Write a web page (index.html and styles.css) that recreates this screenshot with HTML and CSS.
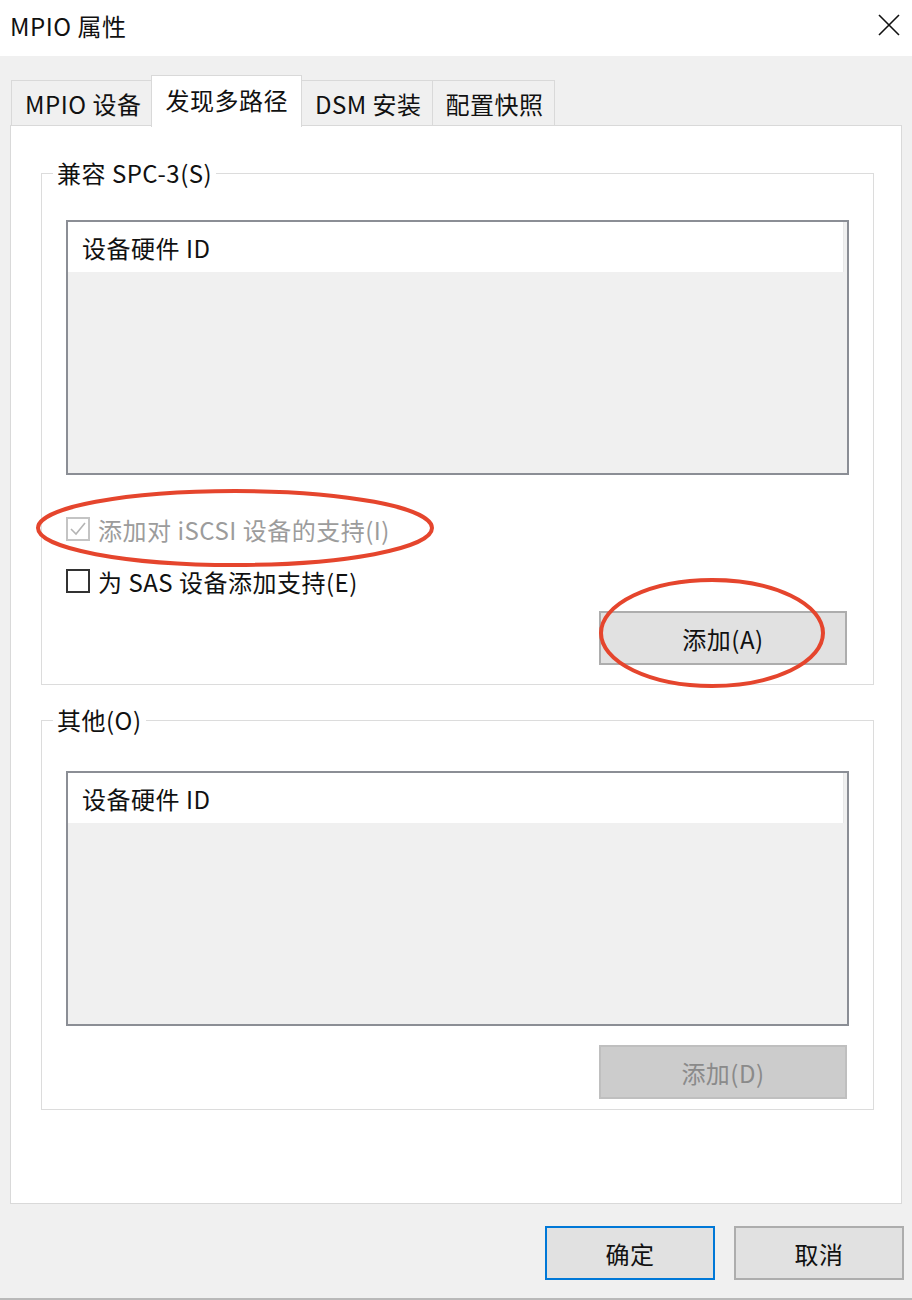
FILE: index.html
```html
<!DOCTYPE html>
<html lang="zh-CN">
<head>
    <meta charset="UTF-8">
    <title>MPIO 属性</title>
    <link rel="stylesheet" href="styles.css">
</head>
<body>
    <div class="window">
        <div class="titlebar">
            <span class="title">MPIO 属性</span>
            <svg class="close-icon" width="22" height="22" viewBox="0 0 22 22">
                <path d="M1 1 L21 21 M21 1 L1 21" stroke="#111" stroke-width="1.6" fill="none"/>
            </svg>
        </div>

        <div class="tabs">
            <div class="tab">MPIO 设备</div>
            <div class="tab active">发现多路径</div>
            <div class="tab">DSM 安装</div>
            <div class="tab">配置快照</div>
        </div>

        <div class="panel">
            <fieldset class="group group-spc">
                <legend>兼容 SPC-3(S)</legend>
                <div class="listbox">
                    <div class="list-header">设备硬件 ID</div>
                </div>

                <div class="options">
                    <div class="check-row disabled mark-wrap">
                        <span class="checkbox checked">
                            <svg width="18" height="18" viewBox="0 0 18 18">
                                <path d="M2 9 L7 14 L16 3" stroke="#b4b4b4" stroke-width="1.6" fill="none"/>
                            </svg>
                        </span>
                        <span>添加对 iSCSI 设备的支持(I)</span>
                        <svg class="mark mark-iscsi" width="404" height="84" viewBox="0 0 404 84">
                            <ellipse cx="202" cy="42" rx="197" ry="37" stroke="#e5452d" stroke-width="4" fill="none"/>
                        </svg>
                    </div>
                    <div class="check-row">
                        <span class="checkbox"></span>
                        <span>为 SAS 设备添加支持(E)</span>
                    </div>
                </div>

                <div class="button-row">
                    <div class="mark-wrap">
                        <button class="btn btn-add">添加(A)</button>
                        <svg class="mark mark-add" width="232" height="116" viewBox="0 0 232 116">
                            <ellipse cx="116" cy="58" rx="111" ry="53" stroke="#e5452d" stroke-width="4" fill="none"/>
                        </svg>
                    </div>
                </div>
            </fieldset>

            <fieldset class="group group-other">
                <legend>其他(O)</legend>
                <div class="listbox">
                    <div class="list-header">设备硬件 ID</div>
                </div>
                <div class="button-row">
                    <button class="btn btn-add" disabled>添加(D)</button>
                </div>
            </fieldset>
        </div>

        <div class="footer">
            <button class="btn btn-dialog default">确定</button>
            <button class="btn btn-dialog">取消</button>
        </div>
    </div>
</body>
</html>
```

FILE: styles.css
```css
* {
    box-sizing: border-box;
}

body {
    margin: 0;
    background: #f0f0f0;
    font-family: "Noto Sans CJK SC", "Liberation Sans", sans-serif;
    font-size: 24px;
    letter-spacing: 0.5px;
    color: #111;
}

.window {
    width: 912px;
    height: 1300px;
    display: flex;
    flex-direction: column;
    border-bottom: 2px solid #b9b9b9;
}

.titlebar {
    height: 56px;
    background: #fff;
    display: flex;
    align-items: center;
    justify-content: space-between;
    padding: 0 12px 6px 10px;
}

.title {
    font-size: 24px;
}

/* tabs */
.tabs {
    display: flex;
    align-items: flex-end;
    margin: 19px 0 0 12px;
    height: 50px;
    position: relative;
    z-index: 1;
}

.tab {
    height: 45px;
    padding: 0 10px 0 13px;
    display: flex;
    align-items: center;
    background: #f0f0f0;
    border: 1px solid #d9d9d9;
    border-bottom: none;
    margin-left: -1px;
}

.tab.active {
    height: 52px;
    margin-bottom: -2px;
    background: #fff;
    padding: 0 13px 4px;
}

.panel {
    margin: 0 10px;
    height: 1079px;
    background: #fff;
    border: 1px solid #d9d9d9;
    padding: 32px 27px 0 30px;
}

/* group boxes */
.group {
    margin: 0;
    border: 1px solid #dcdcdc;
    padding: 32px 24px 19px 24px;
}

.group legend {
    padding: 0 4px;
    margin-left: -13px;
    line-height: 30px;
}

.group-other {
    margin-top: 20px;
    padding-top: 36px;
    padding-bottom: 10px;
}

.listbox {
    height: 255px;
    border: 2px solid #8b8e95;
    background: #f0f0f0;
}

.list-header {
    height: 50px;
    background: #fff;
    border-right: 1px solid #e8e8e8;
    margin-right: 3px;
    padding-left: 14px;
    display: flex;
    align-items: center;
}

.options {
    margin-top: 39px;
    display: flex;
    flex-direction: column;
    gap: 22px;
}

.check-row {
    height: 30px;
    display: flex;
    align-items: center;
    gap: 8px;
}

.check-row.disabled {
    color: #9c9c9c;
}

.checkbox {
    width: 24px;
    height: 24px;
    border: 2px solid #333;
    background: #fff;
    display: flex;
    align-items: center;
    justify-content: center;
}

.checkbox.checked {
    border-color: #c4c4c4;
}

.button-row {
    display: flex;
    justify-content: flex-end;
    margin-top: 15px;
    padding-right: 2px;
}

.group-other .button-row {
    margin-top: 19px;
}

.btn {
    font-family: inherit;
    font-size: 24px;
    letter-spacing: 0.5px;
    color: #111;
    background: #e1e1e1;
    border: 2px solid #adadad;
    padding: 0;
}

.btn-add {
    width: 248px;
    height: 54px;
}

.btn-add:disabled {
    background: #cccccc;
    border-color: #bfbfbf;
    color: #8a8a8a;
}

/* red annotation marks */
.mark-wrap {
    position: relative;
}

.mark {
    position: absolute;
    pointer-events: none;
}

.mark-iscsi {
    left: -33px;
    top: -28px;
}

.mark-add {
    left: -3px;
    top: -36px;
}

/* footer */
.footer {
    display: flex;
    justify-content: flex-end;
    gap: 19px;
    padding: 22px 8px 0 0;
}

.btn-dialog {
    width: 170px;
    height: 54px;
}

.btn-dialog.default {
    border-color: #0078d7;
}
```
